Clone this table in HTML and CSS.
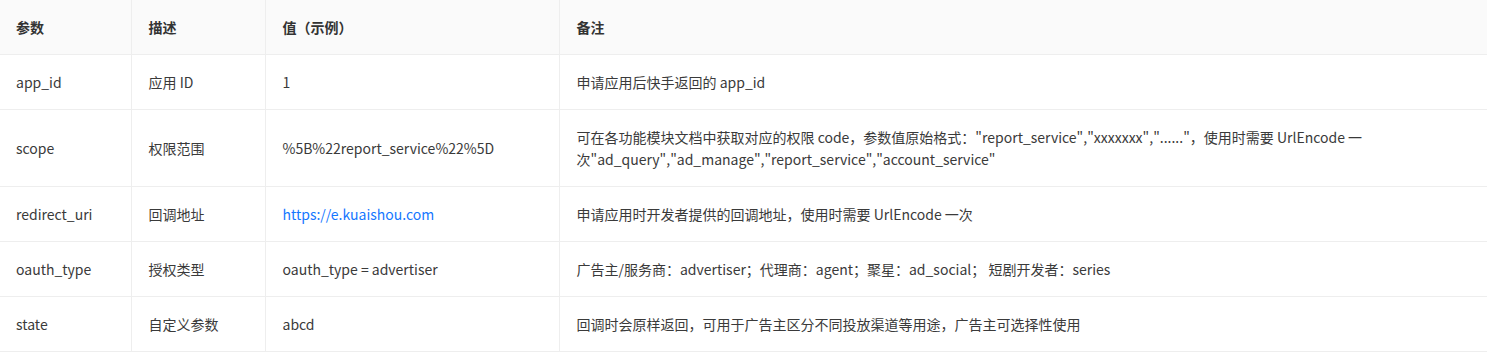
FILE: index.html
```html
<!DOCTYPE html>
<html lang="zh-CN">
<head>
<meta charset="utf-8">
<title>参数</title>
<link rel="stylesheet" href="styles.css">
</head>
<body>
<table class="params">
  <colgroup>
    <col class="c1"><col class="c2"><col class="c3"><col class="c4">
  </colgroup>
  <thead>
    <tr><th>参数</th><th>描述</th><th>值（示例）</th><th>备注</th></tr>
  </thead>
  <tbody>
    <tr><td>app_id</td><td>应用 ID</td><td>1</td><td>申请应用后快手返回的 app_id</td></tr>
    <tr><td>scope</td><td>权限范围</td><td>%5B%22report_service%22%5D</td><td><div class="note">可在各功能模块文档中获取对应的权限 code，参数值原始格式："report_service","xxxxxxx","......"，使用时需要 UrlEncode 一次"ad_query","ad_manage","report_service","account_service"</div></td></tr>
    <tr><td>redirect_uri</td><td>回调地址</td><td><a class="link" href="#">https://e.kuaishou.com</a></td><td>申请应用时开发者提供的回调地址，使用时需要 UrlEncode 一次</td></tr>
    <tr><td>oauth_type</td><td>授权类型</td><td>oauth_type = advertiser</td><td>广告主/服务商：advertiser；代理商：agent；聚星：ad_social； 短剧开发者：series</td></tr>
    <tr><td>state</td><td>自定义参数</td><td>abcd</td><td>回调时会原样返回，可用于广告主区分不同投放渠道等用途，广告主可选择性使用</td></tr>
  </tbody>
</table>
</body>
</html>
```
FILE: styles.css
```css
html, body {
  margin: 0;
  padding: 0;
  background: #fff;
}
body {
  font-family: "Noto Sans CJK SC", "Noto Sans", sans-serif;
  font-size: 14px;
  color: #333;
}
.params {
  width: 1487px;
  border-collapse: collapse;
  table-layout: fixed;
}
.c1 { width: 131px; }
.c2 { width: 134px; }
.c3 { width: 294px; }
.params th,
.params td {
  text-align: left;
  padding: 16px 16px 16px 17px;
  border-bottom: 1px solid #eeeeee;
  border-left: 1px solid #eeeeee;
  vertical-align: middle;
  line-height: 22px;
}
.params th:first-child,
.params td:first-child {
  border-left: none;
  padding-left: 16px;
}
.params th {
  background: #fafafa;
  font-weight: 700;
  color: #333;
}
.params td {
  color: #3a3a3a;
}
.note {
  max-width: 792px;
}
.link {
  color: #1677ff;
  text-decoration: none;
}
```
